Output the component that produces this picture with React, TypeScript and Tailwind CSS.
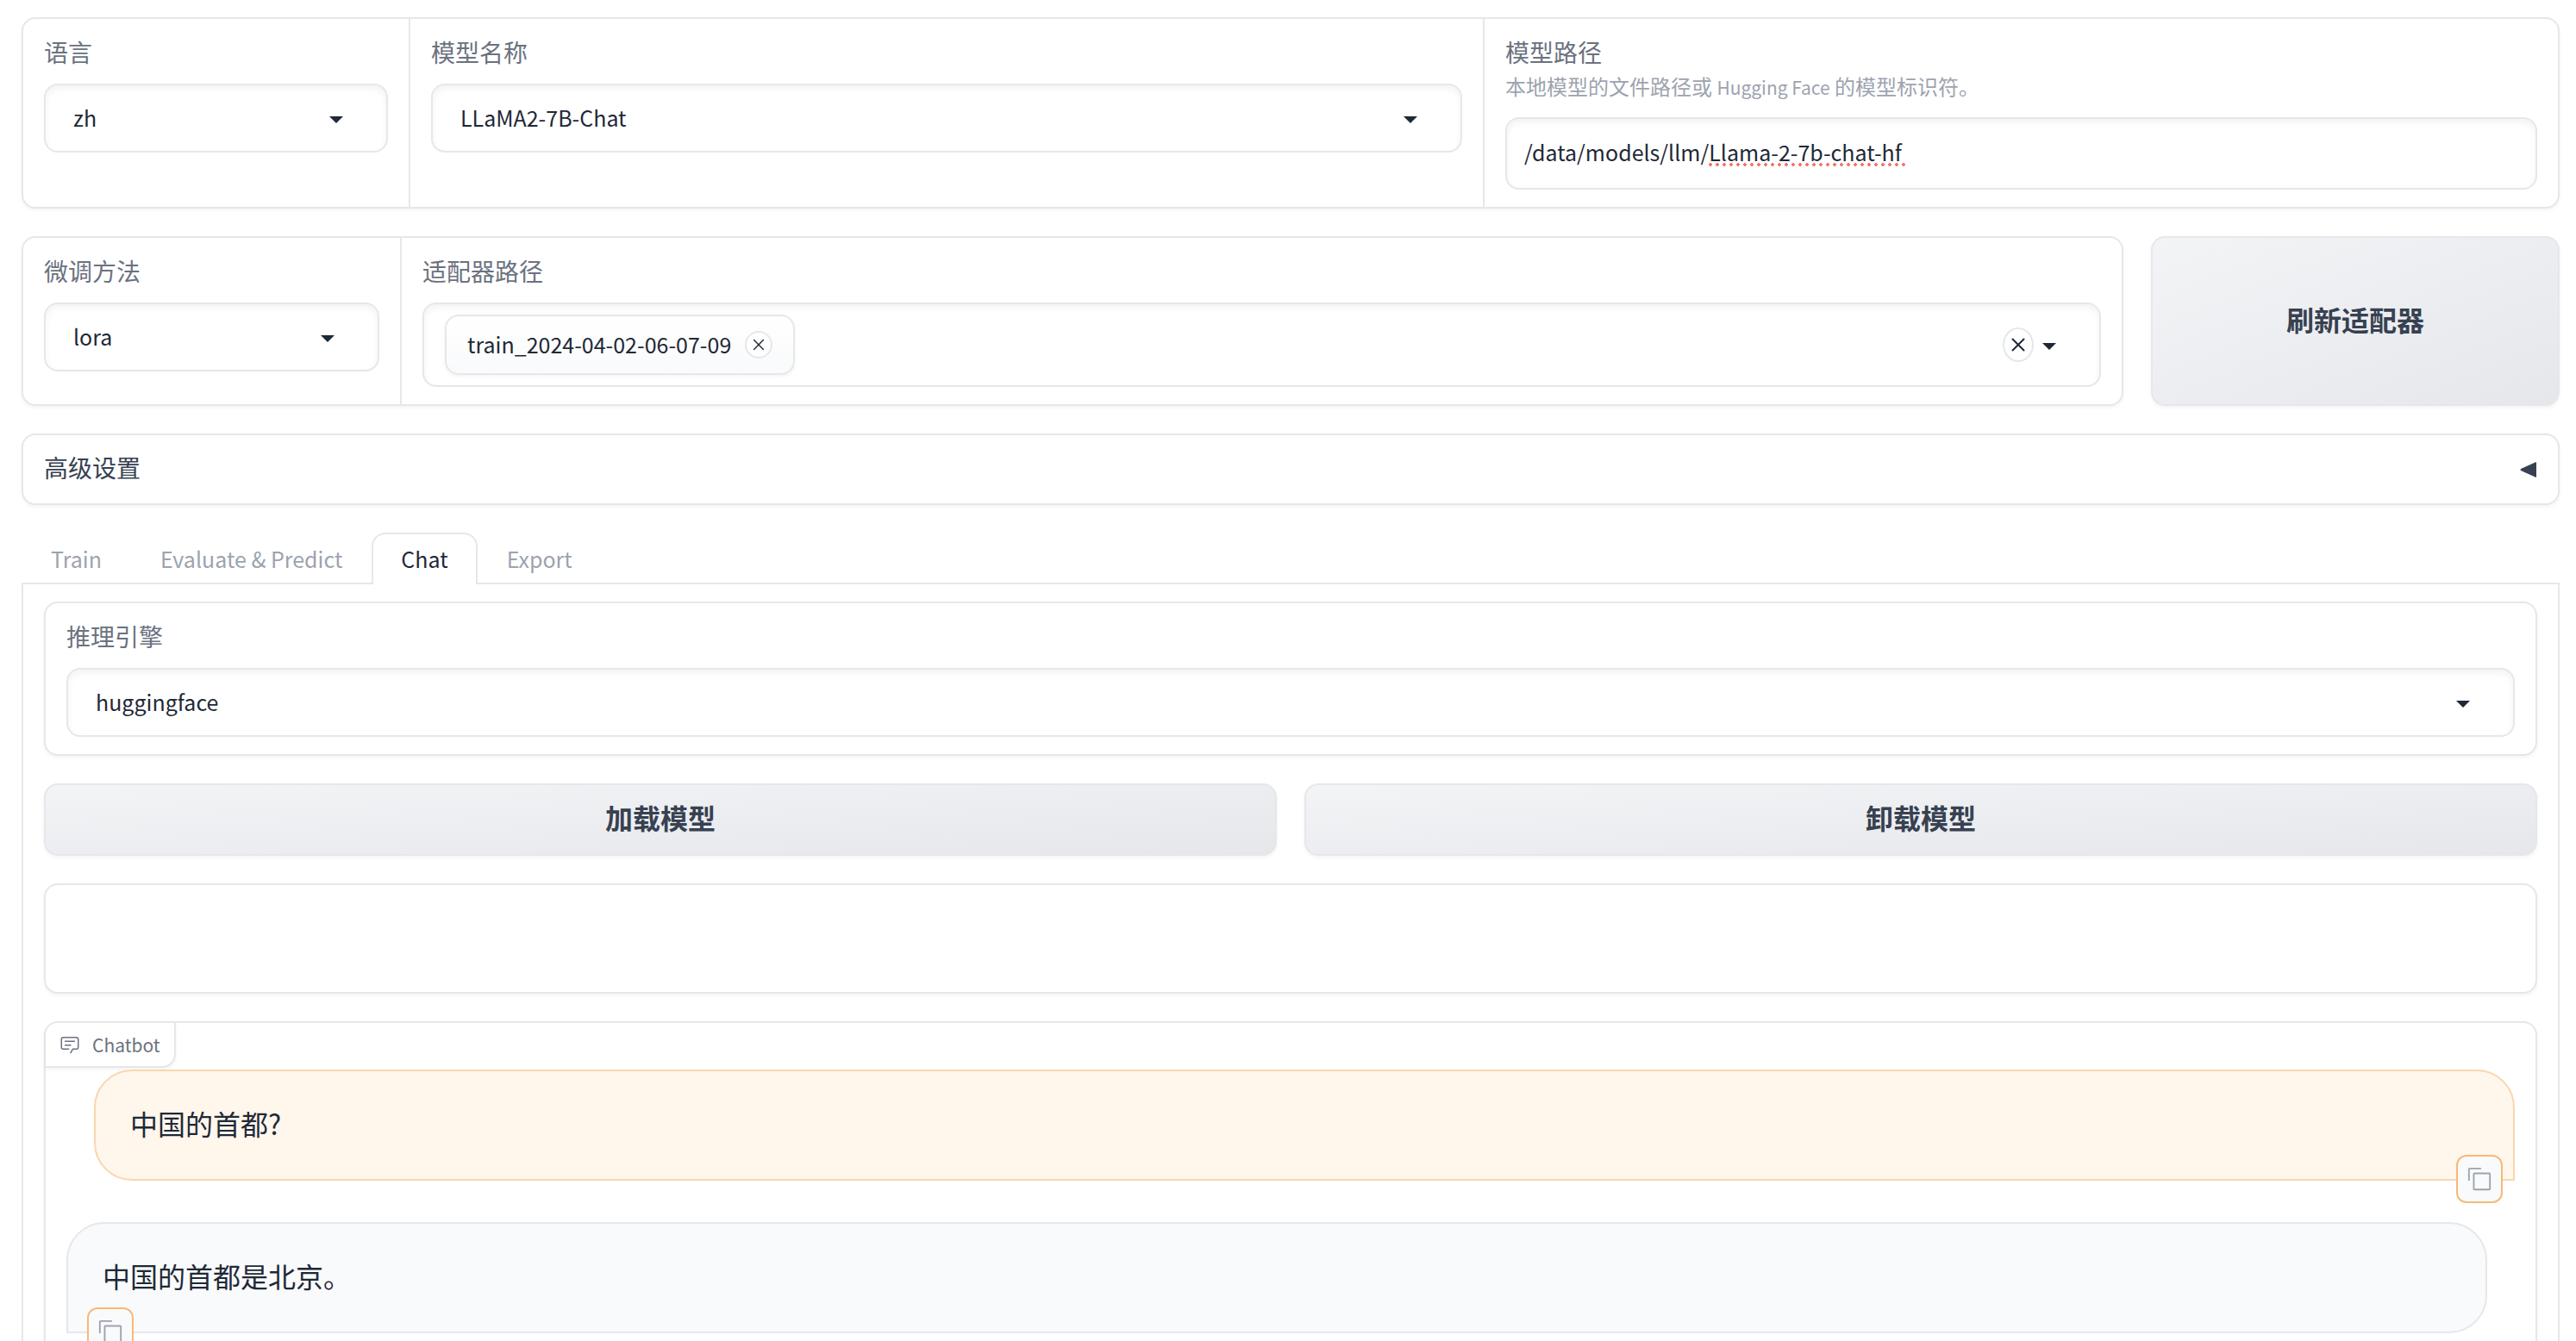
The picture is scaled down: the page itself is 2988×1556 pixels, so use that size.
import { useId, type ReactNode } from "react";

const card = "rounded-2xl border-2 border-[#e5e7eb] bg-white shadow-[0_2px_4px_rgba(0,0,0,0.05)]";
const field = "rounded-2xl border-2 border-[#e5e7eb] bg-white shadow-[inset_0_4px_8px_rgba(0,0,0,0.05)]";
const secondary =
  "flex items-center justify-center rounded-2xl border-2 border-[#e5e7eb] bg-linear-to-br from-[#f3f4f6] to-[#e5e7eb] pb-1.5 text-[32px] leading-[48px] font-bold text-[#374151] shadow-[0_2px_4px_rgba(0,0,0,0.05)]";

function Caret() {
  return (
    <svg viewBox="0 0 18 18" className="size-9 shrink-0 fill-[#1f2937]" aria-hidden="true">
      <path d="M5 8l4 4 4-4z" />
    </svg>
  );
}

function Cross({ className }: { className: string }) {
  return (
    <svg viewBox="0 0 24 24" className={className} fill="none" strokeLinecap="round" aria-hidden="true">
      <path d="M5.500 5.500l13 13M18.500 5.500l-13 13" />
    </svg>
  );
}

function Label({ htmlFor, children }: { htmlFor: string; children: ReactNode }) {
  return (
    <label htmlFor={htmlFor} className="block text-[28px] leading-[42px] text-[#6b7280]">
      {children}
    </label>
  );
}

function SelectField({ label, value }: { label: string; value: string }) {
  const id = useId();
  return (
    <div>
      <Label htmlFor={id}>{label}</Label>
      <div className={`${field} relative mt-4 h-20`}>
        <select
          id={id}
          className="size-full appearance-none bg-transparent px-8 pb-0.5 text-[25px] leading-[36px] text-[#1f2937] outline-none"
        >
          <option>{value}</option>
        </select>
        <span className="pointer-events-none absolute inset-y-0 right-10 flex items-center">
          <Caret />
        </span>
      </div>
    </div>
  );
}

function CopyButton({ className }: { className: string }) {
  return (
    <button
      type="button"
      aria-label="Copy"
      className={`${className} absolute flex h-14 w-[54px] items-center justify-center rounded-xl border-2 border-[#f7b977] bg-[#f9fafb]`}
    >
      <svg viewBox="0 0 32 32" className="size-[30px] fill-[#9ca3af]" aria-hidden="true">
        <path d="M28 10v18H10V10h18m0-2H10a2 2 0 0 0-2 2v18a2 2 0 0 0 2 2h18a2 2 0 0 0 2-2V10a2 2 0 0 0-2-2Z" />
        <path d="M4 18H2V4a2 2 0 0 1 2-2h14v2H4Z" />
      </svg>
    </button>
  );
}

function Tab({ children, active = false }: { children: ReactNode; active?: boolean }) {
  return (
    <button
      type="button"
      role="tab"
      aria-selected={active}
      className={
        active
          ? "-mb-0.5 rounded-t-2xl border-2 border-b-0 border-[#e5e7eb] bg-white px-8 pb-0.5 text-[#1f2937]"
          : "-mb-0.5 border-2 border-b-0 border-transparent px-8 pb-0.5 text-[#9ca3af]"
      }
    >
      {children}
    </button>
  );
}

export default function App() {
  return (
    <main className='h-screen overflow-hidden bg-white pt-5 pr-[19px] pl-[25px] font-["Noto_Sans_CJK_SC","Noto_Sans",sans-serif] text-[#1f2937]'>
      <div className="flex flex-col gap-8">
        <section className={`${card} grid grid-cols-[449fr_1246fr_1245fr]`}>
          <div className="border-r-2 border-[#e5e7eb] px-6 pt-[17px] pb-5">
            <SelectField label="语言" value="zh" />
          </div>
          <div className="border-r-2 border-[#e5e7eb] px-6 pt-[17px] pb-5">
            <SelectField label="模型名称" value="LLaMA2-7B-Chat" />
          </div>
          <div className="px-6 pt-[17px] pb-5">
            <Label htmlFor="model-path">模型路径</Label>
            <p className="text-[24px] leading-[38px] text-[#9ca3af]">
              本地模型的文件路径或 <span className="text-[21px]">Hugging Face</span> 的模型标识符。
            </p>
            <div className={`${field} relative mt-4 h-[84px]`}>
              <input
                id="model-path"
                type="text"
                spellCheck={false}
                defaultValue="/data/models/llm/Llama-2-7b-chat-hf"
                className="size-full bg-transparent px-5 pb-1 text-[25px] leading-[36px] outline-none"
              />
              <span
                aria-hidden="true"
                className="pointer-events-none absolute top-[51px] left-[234px] h-1 w-[228px] bg-[radial-gradient(circle_at_2px_2px,#f4776b_2px,transparent_2px)] bg-[length:8px_4px]"
              />
            </div>
          </div>
        </section>

        <div className="grid grid-cols-[2438fr_474fr] gap-8">
          <section className={`${card} grid grid-cols-[439fr_1995fr]`}>
            <div className="border-r-2 border-[#e5e7eb] px-6 pt-[17px] pb-5">
              <SelectField label="微调方法" value="lora" />
            </div>
            <div className="px-6 pt-[17px] pb-5">
              <Label htmlFor="adapter">适配器路径</Label>
              <div className={`${field} mt-4 flex h-[98px] items-center pr-10 pl-6`}>
                <div className="flex h-[70px] items-center gap-4 rounded-2xl border-2 border-[#e5e7eb] bg-linear-to-b from-white to-[#f9fafb] px-6 text-[25px] leading-[36px] shadow-[0_2px_4px_rgba(0,0,0,0.05)]">
                  <span className="pb-0.5">train_2024-04-02-06-07-09</span>
                  <button
                    type="button"
                    aria-label="Remove train_2024-04-02-06-07-09"
                    className="flex size-8 items-center justify-center rounded-full border-2 border-[#e5e7eb] bg-white"
                  >
                    <Cross className="size-5 stroke-[#1f2937] stroke-[1.7]" />
                  </button>
                </div>
                <input id="adapter" type="text" className="min-w-0 flex-1 bg-transparent outline-none" />
                <button
                  type="button"
                  aria-label="Clear"
                  className="flex h-10 w-9 items-center justify-center rounded-[50%] border-2 border-[#e5e7eb] bg-white"
                >
                  <Cross className="size-6 shrink-0 stroke-[#1f2937] stroke-2" />
                </button>
                <Caret />
              </div>
            </div>
          </section>
          <button type="button" className={secondary}>
            刷新适配器
          </button>
        </div>

        <button
          type="button"
          aria-expanded="false"
          className={`${card} flex h-[83px] items-center justify-between px-6 text-[28px] leading-[42px] text-[#374151]`}
        >
          <span className="pb-1.5">高级设置</span>
          <svg viewBox="0 0 20 18" className="h-[18px] w-5 fill-[#374151]" aria-hidden="true">
            <path d="M19 0.6v16.8q0 0.6-0.8 0.3L1 10q-1-1 0-2L18.200 0.300q0.800-0.300 0.800 0.300z" />
          </svg>
        </button>

        <div>
          <div role="tablist" className="flex h-[60px] border-b-2 border-[#e5e7eb] text-[25px] leading-[36px]">
            <Tab>Train</Tab>
            <Tab>Evaluate &amp; Predict</Tab>
            <Tab active>Chat</Tab>
            <Tab>Export</Tab>
          </div>
          <div role="tabpanel" className="flex flex-col gap-8 border-x-2 border-[#e5e7eb] px-6 pt-5">
            <section className={`${card} px-6 pt-[17px] pb-5`}>
              <SelectField label="推理引擎" value="huggingface" />
            </section>
            <div className="grid h-[84px] grid-cols-2 gap-8">
              <button type="button" className={secondary}>
                加载模型
              </button>
              <button type="button" className={secondary}>
                卸载模型
              </button>
            </div>
            <section className={`${card} h-[128px]`} />
            <section className={`${card} relative h-[800px] px-6 pt-[54px]`}>
              <div className="absolute top-0 left-0 flex h-[52px] items-center gap-3.5 rounded-tl-[14px] rounded-br-2xl border-r-2 border-b-2 border-[#e5e7eb] bg-white px-4 text-[21px] leading-[30px] text-[#6b7280] shadow-[0_2px_4px_rgba(0,0,0,0.05)]">
                <svg viewBox="0 0 32 32" className="size-6 fill-current" aria-hidden="true">
                  <path d="M17.740 30L16 29l4-7h6a2 2 0 0 0 2-2V8a2 2 0 0 0-2-2H6a2 2 0 0 0-2 2v12a2 2 0 0 0 2 2h9v2H6a4 4 0 0 1-4-4V8a4 4 0 0 1 4-4h20a4 4 0 0 1 4 4v12a4 4 0 0 1-4 4h-4.840Z" />
                  <path d="M8 10h16v2H8zm0 6h10v2H8z" />
                </svg>
                <span>Chatbot</span>
              </div>
              <div className="flex flex-col gap-12 text-[32px] leading-[48px]">
                <div className="relative ml-8 h-[129px] rounded-[44px] rounded-br-none border-2 border-[#fad6ad] bg-[#fff6ec] px-10 pt-9">
                  中国的首都?
                  <CopyButton className="right-3 -bottom-7" />
                </div>
                <div className="relative mr-8 h-[129px] rounded-[44px] rounded-bl-none border-2 border-[#e5e7eb] bg-[#f9fafb] px-10 pt-9">
                  中国的首都是北京。
                  <CopyButton className="-bottom-7 left-[22px]" />
                </div>
              </div>
            </section>
          </div>
        </div>
      </div>
    </main>
  );
}
